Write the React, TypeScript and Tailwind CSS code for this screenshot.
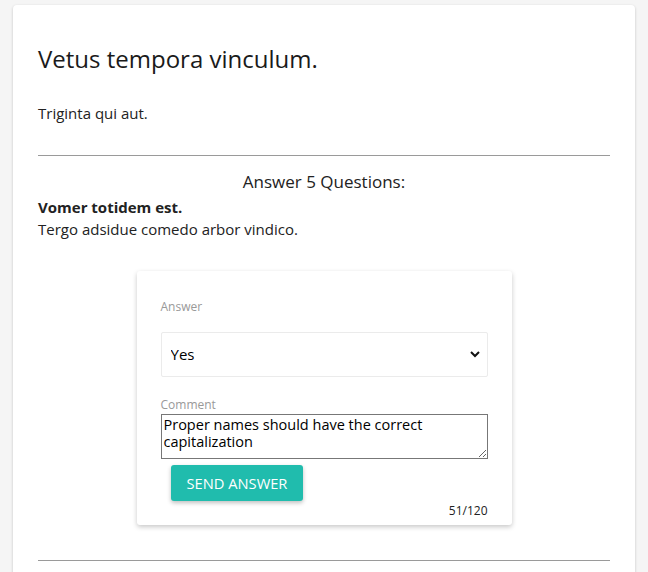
import React from 'react';

const font = { fontFamily: '"Open Sans", "Noto Sans", sans-serif' };

export default function App() {
  return (
    <div className="min-h-[572px] bg-[#f5f5f5] px-[13px] pt-[5px]" style={font}>
      <div className="rounded-[4px] bg-white px-[25px] pt-[38px] pb-[20px] shadow-[0_1px_3px_rgba(0,0,0,0.2)] text-[#222]">
        <h1 className="text-[24px] leading-[32px] text-[#1a1a1a]">Vetus tempora vinculum.</h1>
        <p className="mt-[27px] text-[15px] leading-[22px]">Triginta qui aut.</p>

        <hr className="mt-[31px] border-t border-[#9a9a9a]" />

        <div className="mt-[14px] text-center text-[17px] leading-[24px]">Answer 5 Questions:</div>
        <div className="mt-[2px] text-[15px] font-bold leading-[22px]">Vomer totidem est.</div>
        <div className="text-[15px] leading-[22px]">Tergo adsidue comedo arbor vindico.</div>

        <div className="mx-auto mt-[31px] w-[375px] rounded-[3px] bg-white px-[24px] pt-[27px] pb-[6px] shadow-[0_2px_5px_rgba(0,0,0,0.22)]">
          <label className="block text-[12px] leading-[18px] text-[#999]">Answer</label>
          <div className="relative mt-[16px]">
            <select
              className="h-[45px] w-full appearance-none rounded-[2px] border border-[#ebebeb] bg-white px-[9px] text-[15px] text-black outline-none"
              style={font}
              defaultValue="Yes"
            >
              <option>Yes</option>
              <option>No</option>
            </select>
            <svg
              className="pointer-events-none absolute right-[8px] top-[18px]"
              width="10"
              height="8"
              viewBox="0 0 10 8"
            >
              <path d="M1 2 L5 6 L9 2" fill="none" stroke="#111" strokeWidth="2" />
            </svg>
          </div>

          <label className="mt-[20px] block text-[12px] leading-[16px] text-[#999]">Comment</label>
          <textarea
            className="mt-[1px] block h-[45px] w-full resize-y rounded-none border border-[#777] px-[2px] py-[1px] text-[14.5px] leading-[17px] text-black outline-none"
            style={font}
            defaultValue="Proper names should have the correct capitalization"
          />
          <button
            className="ml-[10px] mt-[6px] h-[36px] rounded-[3px] bg-[#20bcad] px-[16px] text-[14.7px] uppercase text-white shadow-[0_2px_4px_rgba(0,0,0,0.25)]"
            style={font}
          >
            Send Answer
          </button>
          <div className="mt-[2px] text-right text-[12px] leading-[16px] text-[#222]">51/120</div>
        </div>

        <hr className="mt-[35px] border-t border-[#9a9a9a]" />
      </div>
    </div>
  );
}
